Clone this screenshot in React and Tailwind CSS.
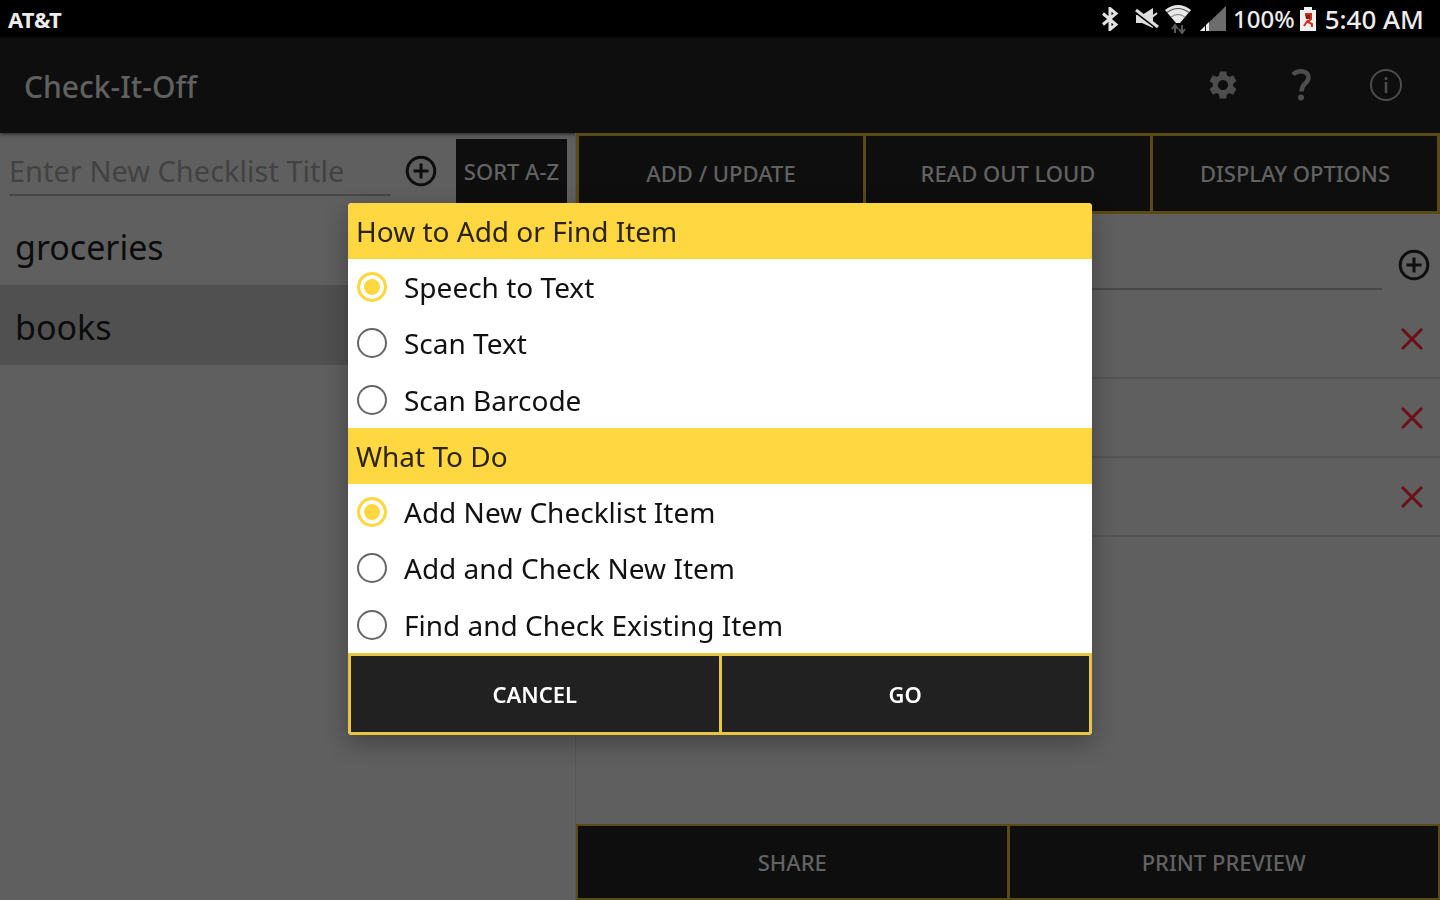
import React, { useState } from 'react';
import { MdSettings } from 'react-icons/md';

const CHECKLISTS = ['groceries', 'books'];
const METHODS = ['Speech to Text', 'Scan Text', 'Scan Barcode'];
const ACTIONS = ['Add New Checklist Item', 'Add and Check New Item', 'Find and Check Existing Item'];

function PlusCircle() {
  return (
    <svg className="size-8" viewBox="0 0 32 32" fill="none" stroke="#0e0e0e" strokeWidth="3">
      <circle cx="16" cy="16" r="13.8" />
      <path d="M16 8.5v15M8.5 16h15" />
    </svg>
  );
}

function StatusBar() {
  return (
    <div className="flex h-[38px] shrink-0 items-center justify-between bg-black pr-4 pl-2 text-[#ececec]">
      <span className="text-[22px] font-bold">AT&amp;T</span>
      <div className="flex items-center">
        <svg className="mr-4 h-6 w-[18px]" viewBox="0 0 18 24" fill="none" stroke="#e4e4e4" strokeWidth="3">
          <path d="M2 6.500l13 11-6 5V1.500l6 5-13 11" />
        </svg>
        <svg className="mr-[5px] size-6" viewBox="0 0 24 24" fill="#dedede">
          <path d="M1 8h6l11-7v20L7 16H1z" />
          <path d="M1 5l21 16" stroke="#000" strokeWidth="3" />
          <path d="M1 3l22 17" stroke="#dedede" strokeWidth="3" />
          <path d="M17 10l5-4" stroke="#dedede" strokeWidth="2" />
        </svg>
        <svg className="mr-[7px] h-8 w-7" viewBox="0 0 28 32">
          <path d="M1 7Q14-3 27 7L16 20h-4z" fill="#e8e8e8" />
          <path d="M3 9.500Q14 1.500 25 9.500" fill="none" stroke="#555" strokeWidth="1.200" />
          <path d="M7 14Q14 9 21 14" fill="none" stroke="#777" />
          <path d="M11 30v-8m-3 4 3-4 3 4M18 22v8m-3-4 3 4 3-4" fill="none" stroke="#5a5a5a" strokeWidth="2" />
        </svg>
        <svg className="mr-[6px] h-[26px] w-7" viewBox="0 0 28 26">
          <path d="M1 25L27 0v25z" fill="#6d6d6d" />
          <path d="M1 25l9-9v9z" fill="#ececec" />
          <path d="M6.500 15v11" stroke="#000" />
        </svg>
        <span className="text-2xl font-medium">100%</span>
        <svg className="mr-2 ml-1 h-[26px] w-[18px]" viewBox="0 0 18 26">
          <path d="M5 1h8v3h4v21H1V4h4z" fill="#f0f0f0" />
          <path d="M6 8h6v5H7z" fill="#8e1c10" />
          <path d="M6 8h6v5l-3 3 4 2v3M9 14l-4 6" fill="none" stroke="#d0301c" strokeWidth="2" />
        </svg>
        <span className="text-[26px] font-medium">5:40 AM</span>
      </div>
    </div>
  );
}

function AppBar() {
  return (
    <header className="flex h-[95px] shrink-0 items-center justify-between bg-[#0e0e0e] pr-[37px] pb-[2px] pl-6 text-[#606060] shadow-[0_1px_4px_#222]">
      <h1 className="pt-1 text-[30px] font-medium">Check-It-Off</h1>
      <div className="flex items-center">
        <button aria-label="Settings" className="mr-[49px] text-[#4d4d4d]">
          <MdSettings className="size-[34px]" />
        </button>
        <button aria-label="Help" className="mr-[56px] text-[#4d4d4d]">
          <svg className="h-8 w-6" viewBox="0 0 24 32" fill="none" stroke="currentColor" strokeWidth="4.500">
            <path d="M4 5.500C9 .5 19.500 1.500 19.500 8.500C19.500 14.500 12.500 14 12.500 22.500" />
            <circle cx="12" cy="28.500" r="3" fill="currentColor" stroke="none" />
          </svg>
        </button>
        <button aria-label="About" className="text-[#4d4d4d]">
          <svg className="size-[34px]" viewBox="0 0 34 34" fill="none" stroke="currentColor" strokeWidth="2">
            <circle cx="17" cy="17" r="15" />
            <path d="M17 14v11M17 9v3" strokeWidth="2.500" />
          </svg>
        </button>
      </div>
    </header>
  );
}

function BarButton({ children }) {
  return <button className="bg-[#0e0e0e] text-[22px] font-medium text-[#626262]">{children}</button>;
}

function RadioList({ name, options, value, onChange }) {
  return (
    <div className="flex h-[169px] flex-col">
      {options.map((option) => (
        <label key={option} className="flex flex-1 items-center gap-[17px] pl-[9px] text-[28px] text-[#111]">
          <input
            type="radio"
            name={name}
            checked={value === option}
            onChange={() => onChange(option)}
            className="size-[30px] shrink-0 appearance-none rounded-full border-2 border-[#666] checked:border-3 checked:border-[#ffd740] checked:bg-[#ffd740] checked:shadow-[inset_0_0_0_4px_white]"
          />
          <span>{option}</span>
        </label>
      ))}
    </div>
  );
}

function AddItemDialog() {
  const [method, setMethod] = useState(METHODS[0]);
  const [action, setAction] = useState(ACTIONS[0]);

  return (
    <div role="dialog" aria-label="Add item" className="w-[744px] overflow-hidden rounded-sm bg-white shadow-[0_8px_24px_rgba(0,0,0,0.3)]">
      <h2 className="flex h-14 items-center bg-[#ffd740] pl-2 text-[28px] text-[#2b240a]">How to Add or Find Item</h2>
      <RadioList name="method" options={METHODS} value={method} onChange={setMethod} />
      <h2 className="flex h-14 items-center bg-[#ffd740] pl-2 text-[28px] text-[#2b240a]">What To Do</h2>
      <RadioList name="action" options={ACTIONS} value={action} onChange={setAction} />
      <div className="grid h-[82px] grid-cols-2 gap-[3px] bg-[#e8c63f] p-[3px]">
        <button className="bg-[#212121] text-[22px] font-semibold text-white">CANCEL</button>
        <button className="bg-[#212121] text-[22px] font-semibold text-white">GO</button>
      </div>
    </div>
  );
}

export default function App() {
  return (
    <div className="flex h-screen flex-col bg-[#5f5f5f] font-['Noto_Sans',sans-serif]">
      <StatusBar />
      <AppBar />
      <main className="flex min-h-0 flex-1">
        <section className="w-2/5 border-r border-[#575757]">
          <div className="flex h-[73px] items-start pt-[6px] pr-2 pl-[9px]">
            <input
              aria-label="Checklist title"
              placeholder="Enter New Checklist Title"
              className="h-[57px] min-w-0 flex-1 border-b-2 border-[#484848] pt-2 text-[29px] placeholder:text-[#424242]"
            />
            <button aria-label="Add checklist" className="mt-4 mr-[19px] ml-[14px]">
              <PlusCircle />
            </button>
            <button className="h-[64px] w-[111px] bg-[#0e0e0e] text-[22px] font-medium whitespace-nowrap text-[#626262]">SORT A-Z</button>
          </div>
          <ul className="text-[34px] text-[#0c0c0c]">
            {CHECKLISTS.map((name) => (
              <li key={name} className="flex h-[79px] items-center pt-1 pl-[15px] last:h-20 last:bg-[#505050]">
                {name}
              </li>
            ))}
          </ul>
        </section>

        <section className="flex flex-1 flex-col">
          <div className="grid h-[81px] grid-cols-3 gap-[3px] bg-[#5a4a15] p-[3px]">
            <BarButton>ADD / UPDATE</BarButton>
            <BarButton>READ OUT LOUD</BarButton>
            <BarButton>DISPLAY OPTIONS</BarButton>
          </div>
          <div className="flex h-[86px] items-start pr-[10px] pl-2">
            <input aria-label="New item" className="h-[76px] flex-1 border-b-2 border-[#484848]" />
            <button aria-label="Add item" className="mt-[35px] ml-4">
              <PlusCircle />
            </button>
          </div>
          <ul>
            {[1, 2, 3].map((item) => (
              <li key={item} className="flex h-[79px] items-center justify-end border-b-2 border-[#545454] pr-[17px]">
                <button aria-label="Delete item">
                  <svg className="size-[22px]" viewBox="0 0 22 22" stroke="#6c1015" strokeWidth="3">
                    <path d="M1 1l20 20M21 1L1 21" />
                  </svg>
                </button>
              </li>
            ))}
          </ul>
          <div className="mt-auto grid h-[76px] grid-cols-2 gap-[3px] bg-[#5a4a15] p-[2px]">
            <BarButton>SHARE</BarButton>
            <BarButton>PRINT PREVIEW</BarButton>
          </div>
        </section>
      </main>

      <div className="fixed inset-x-0 top-[38px] bottom-0 flex items-center justify-center">
        <AddItemDialog />
      </div>
    </div>
  );
}
